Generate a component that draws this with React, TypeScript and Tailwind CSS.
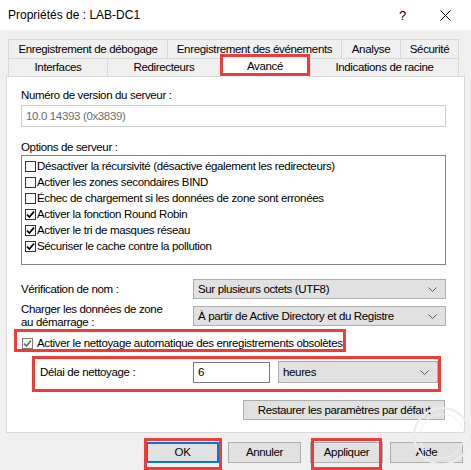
import React from "react";

const Chevron = () => (
  <svg width="9" height="5" viewBox="0 0 9 5" className="shrink-0">
    <path d="M0.5 0.5 L4.5 4.5 L8.5 0.5" fill="none" stroke="#5a5a5a" strokeWidth="1" />
  </svg>
);

const Check = ({ checked, muted }: { checked: boolean; muted?: boolean }) => (
  <span
    className={`w-[11px] h-[11px] shrink-0 bg-white border flex items-center justify-center ${
      muted ? "border-[#7a7a7a]" : "border-[#333333]"
    }`}
  >
    {checked && (
      <svg width="9" height="9" viewBox="0 0 9 9">
        <path d="M1 4.6 L3.4 7 L8 1.6" fill="none" stroke={muted ? "#6f6f6f" : "#000"} strokeWidth="1.7" />
      </svg>
    )}
  </span>
);

const Select = ({ value, className }: { value: string; className: string }) => (
  <div className={`bg-[#e1e1e1] border border-[#adadad] flex items-center pl-[4px] pr-[8px] ${className}`}>
    <span className="flex-1 whitespace-nowrap">{value}</span>
    <Chevron />
  </div>
);

const options = [
  { label: "Désactiver la récursivité (désactive également les redirecteurs)", checked: false },
  { label: "Activer les zones secondaires BIND", checked: false },
  { label: "Échec de chargement si les données de zone sont erronées", checked: false },
  { label: "Activer la fonction Round Robin", checked: true },
  { label: "Activer le tri de masques réseau", checked: true },
  { label: "Sécuriser le cache contre la pollution", checked: true },
];

const tab = "h-full border-t border-l border-[#d9d9d9] bg-[#f0f0f0] flex items-center justify-center whitespace-nowrap";

export default function App() {
  return (
    <div className="relative w-[471px] h-[470px] overflow-hidden bg-[#f0f0f0] text-black text-[11.5px] leading-[15px] tracking-[-0.35px] font-['Liberation_Sans',Arial,sans-serif]">
      {/* title bar */}
      <div className="h-[30px] bg-white flex items-center pl-[8px] tracking-normal">
        <span className="text-[12px]">Propriétés de : LAB-DC1</span>
        <span className="ml-auto w-[45px] text-center text-[13px]">?</span>
        <span className="w-[40px] mr-[6px] flex justify-center">
          <svg width="11" height="11" viewBox="0 0 11 11">
            <path d="M0.5 0.5 L10.5 10.5 M10.5 0.5 L0.5 10.5" stroke="#000" strokeWidth="1" />
          </svg>
        </span>
      </div>

      <div className="px-[6px] pt-[9px]">
        {/* tab rows */}
        <div className="ml-[2px] h-[19px] flex">
          <div className={`${tab} w-[159px]`}>Enregistrement de débogage</div>
          <div className={`${tab} w-[174px]`}>Enregistrement des événements</div>
          <div className={`${tab} w-[59px]`}>Analyse</div>
          <div className={`${tab} w-[59px] border-r`}>Sécurité</div>
        </div>
        <div className="ml-[2px] h-[18px] flex items-end">
          <div className={`${tab} w-[99px]`}>Interfaces</div>
          <div className={`${tab} w-[113px]`}>Redirecteurs</div>
          <div className="relative z-10 w-[90px] h-[23px] -mb-px bg-white border-t border-l border-r border-[#d9d9d9] flex items-center justify-center">
            Avancé
          </div>
          <div className={`${tab} w-[149px] border-r`}>Indications de racine</div>
        </div>

        {/* panel */}
        <div className="h-[357px] bg-white border border-[#d9d9d9] pl-[14px] pr-[18px] pt-[11px] flex flex-col">
          <div>Numéro de version du serveur :</div>
          <div className="mt-[2px] h-[22px] border border-[#cccccc] pl-[4px] flex items-center text-[#6d6d6d]">
            10.0 14393 (0x3839)
          </div>

          <div className="mt-[13px]">Options de serveur :</div>
          <div className="h-[110px] border border-[#828790] pt-[2px] pl-[3px]">
            {options.map((o) => (
              <div key={o.label} className="h-[16px] flex items-center gap-[1px] whitespace-nowrap">
                <Check checked={o.checked} />
                <span>{o.label}</span>
              </div>
            ))}
          </div>

          <div className="mt-[14px] flex items-center">
            <span className="w-[172px]">Vérification de nom :</span>
            <Select value="Sur plusieurs octets (UTF8)" className="flex-1 h-[20px]" />
          </div>
          <div className="mt-[4px] flex items-center">
            <span className="w-[172px] leading-[13px]">
              Charger les données de zone
              <br />
              au démarrage :
            </span>
            <Select value="À partir de Active Directory et du Registre" className="flex-1 h-[20px]" />
          </div>

          <div className="mt-[7px] ml-[1px] flex items-center gap-[4px] whitespace-nowrap">
            <Check checked muted />
            <span>Activer le nettoyage automatique des enregistrements obsolètes</span>
          </div>

          <div className="mt-[10px] pl-[19px] flex items-center">
            <span className="w-[153px]">Délai de nettoyage :</span>
            <div className="w-[77px] h-[21px] border border-[#7a7a7a] pl-[4px] flex items-center">6</div>
            <Select value="heures" className="ml-[8px] w-[160px] h-[22px]" />
          </div>

          <div className="mt-[17px] self-end mr-[1px] w-[202px] h-[20px] bg-[#e1e1e1] border border-[#adadad] flex items-center justify-center">
            Restaurer les paramètres par défaut
          </div>
        </div>
      </div>

      {/* dialog buttons */}
      <div className="mt-[9px] flex h-[21px]">
        <div className="ml-[146px] w-[73px] border-2 border-[#0078d7] bg-[#e1e1e1] flex items-center justify-center">OK</div>
        <div className="ml-[9px] w-[73px] border border-[#adadad] bg-[#e1e1e1] flex items-center justify-center">Annuler</div>
        <div className="ml-[9px] w-[73px] border border-[#adadad] bg-[#e1e1e1] flex items-center justify-center">Appliquer</div>
        <div className="ml-[7px] w-[73px] border border-[#adadad] bg-[#e1e1e1] flex items-center justify-center">Aide</div>
      </div>

      {/* faint watermark */}
      <svg className="absolute left-[408px] top-[398px] pointer-events-none" width="64" height="72" viewBox="0 0 64 72">
        <circle cx="34" cy="38" r="28" fill="none" stroke="#ececec" strokeWidth="2" />
        <circle cx="34" cy="38" r="22" fill="none" stroke="#f0f0f0" strokeWidth="1" />
      </svg>

      {/* red annotation boxes */}
      <div className="absolute left-[220px] top-[54px] w-[90px] h-[22px] border-[3px] border-[#ee3b3b] z-20" />
      <div className="absolute left-[14px] top-[329px] w-[332px] h-[23px] border-[3px] border-[#ee3b3b] z-20" />
      <div className="absolute left-[32px] top-[356px] w-[409px] h-[36px] border-[3px] border-[#ee3b3b] z-20" />
      <div className="absolute left-[144px] top-[438px] w-[78px] h-[32px] border-[3px] border-[#ee3b3b] z-20" />
      <div className="absolute left-[311px] top-[438px] w-[71px] h-[32px] border-[3px] border-[#ee3b3b] z-20" />
    </div>
  );
}
